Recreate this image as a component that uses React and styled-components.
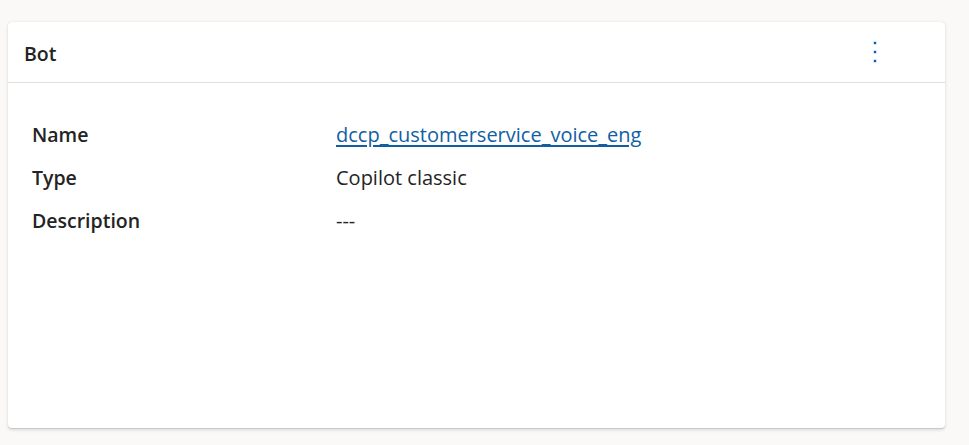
import React from 'react';
import styled, { createGlobalStyle } from 'styled-components';

const GlobalStyle = createGlobalStyle`
  html, body {
    margin: 0;
    background: #faf9f8;
  }
  body {
    padding: 22px 24px 17px 8px;
    font-family: 'Open Sans', 'Noto Sans', sans-serif;
    color: #242424;
  }
`;

const Card = styled.section`
  background: #ffffff;
  border-radius: 4px;
  height: 406px;
  box-shadow: 0 1.6px 3.6px rgba(0, 0, 0, 0.13), 0 0.3px 0.9px rgba(0, 0, 0, 0.11);
  display: flex;
  flex-direction: column;
`;

const Header = styled.header`
  height: 60px;
  display: flex;
  align-items: center;
  justify-content: space-between;
  padding: 0 50px 0 16px;
  border-bottom: 1px solid #e1dfdd;
`;

const Title = styled.h2`
  margin: 0;
  margin-top: 2px;
  font-size: 19.5px;
  font-weight: 600;
  color: #242424;
`;

const MenuButton = styled.button`
  width: 40px;
  height: 40px;
  border: none;
  background: transparent;
  display: flex;
  flex-direction: column;
  align-items: center;
  justify-content: center;
  gap: 7px;
  cursor: pointer;
`;

const Dot = styled.span`
  width: 2px;
  height: 2px;
  background: #115ea3;
  box-shadow: 0 0 0 0.5px rgba(71, 158, 245, 0.6);
`;

const Body = styled.div`
  padding: 38px 24px;
  display: grid;
  grid-template-columns: 304px 1fr;
  row-gap: 16px;
  align-items: center;
`;

const Label = styled.div`
  font-size: 19.5px;
  font-weight: 600;
  line-height: 27px;
`;

const Value = styled.div`
  font-size: 20px;
  line-height: 27px;
  color: #242424;
`;

const Link = styled.a`
  color: #115ea3;
  text-decoration: underline;
  text-underline-offset: 3px;
  text-decoration-thickness: 2px;
`;

const FIELDS = [
  { label: 'Name', value: 'dccp_customerservice_voice_eng', link: true },
  { label: 'Type', value: 'Copilot classic' },
  { label: 'Description', value: '---' },
];

const App = () => (
  <>
    <GlobalStyle />
    <Card>
      <Header>
        <Title>Bot</Title>
        <MenuButton aria-label="More options">
          <Dot />
          <Dot />
          <Dot />
        </MenuButton>
      </Header>
      <Body>
        {FIELDS.map((f) => (
          <React.Fragment key={f.label}>
            <Label>{f.label}</Label>
            <Value>{f.link ? <Link href="#">{f.value}</Link> : f.value}</Value>
          </React.Fragment>
        ))}
      </Body>
    </Card>
  </>
);

export default App;
